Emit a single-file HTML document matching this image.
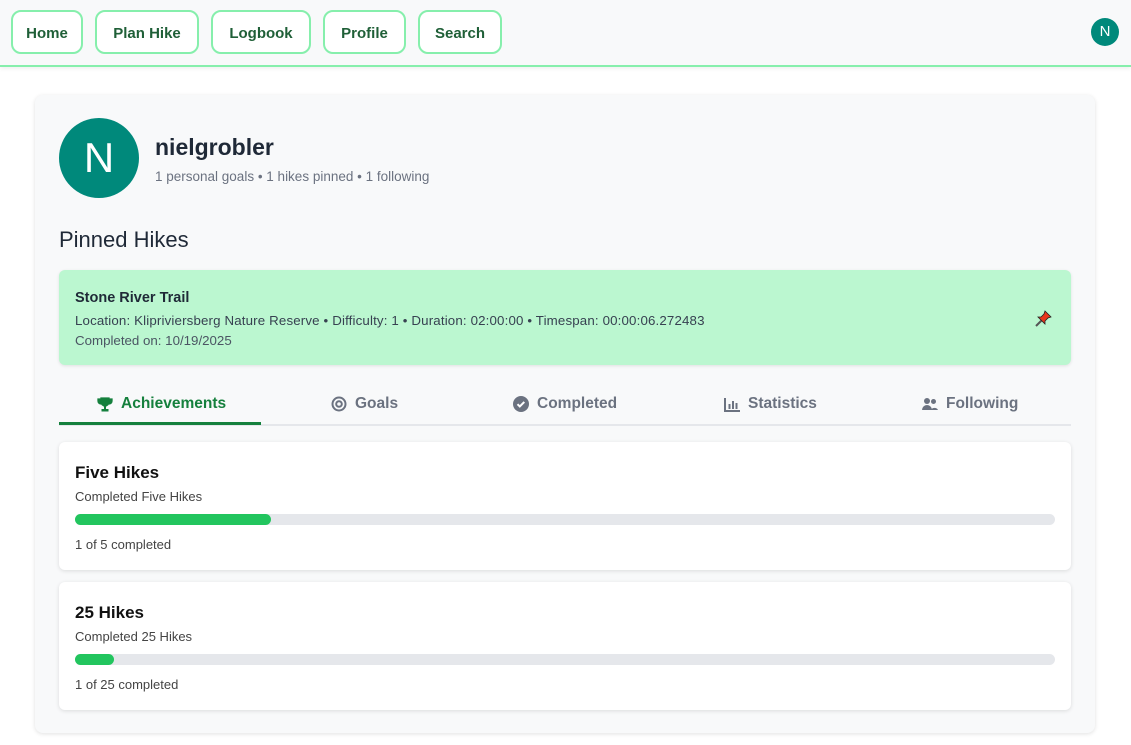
<!DOCTYPE html>
<html><head><style>
*{box-sizing:border-box;margin:0;padding:0}
body{width:1131px;height:745px;background:#fff;font-family:"Liberation Sans",sans-serif;overflow:hidden;position:relative}
.nav{position:absolute;left:0;top:0;width:1131px;height:67px;background:#f8f9fa;border-bottom:2px solid #86efac;box-shadow:0 2px 4px rgba(0,0,0,.06)}
.btn{position:absolute;top:10px;height:44px;border:2px solid #86efac;border-radius:10px;background:#fff;color:#1f5f37;font-weight:bold;font-size:15px;line-height:43px;text-align:center}
.av{position:absolute;left:1091px;top:18px;width:28px;height:28px;border-radius:50%;background:#00897b;color:#fff;font-size:15px;text-align:center;line-height:28px}
.card{position:absolute;left:35px;top:95px;width:1060px;height:638px;background:#f8f9fa;border-radius:8px;box-shadow:0 1px 4px rgba(0,0,0,.12)}
.big{position:absolute;left:59px;top:118px;width:80px;height:80px;border-radius:50%;background:#00897b;color:#fff;font-size:42px;text-align:center;line-height:80px}
.pin{position:absolute;left:59px;top:270px;width:1012px;height:95px;background:#bbf7d0;border-radius:6px;box-shadow:0 1px 3px rgba(0,0,0,.1)}
.tab{position:absolute;top:395px;font-size:15.5px;color:#6b7280;font-weight:bold;display:flex;align-items:center;gap:8px;height:18px}
.tab svg{flex:none}
.ach{position:absolute;left:59px;width:1012px;height:128px;background:#fff;border-radius:6px;box-shadow:0 1px 4px rgba(0,0,0,.12)}
.ach h3{position:absolute;left:16px;top:21px;font-size:17px;color:#111}
.ach .s{position:absolute;left:16px;top:47px;font-size:13px;color:#444}
.bar{position:absolute;left:16px;top:72px;width:980px;height:11px;background:#e5e7eb;border-radius:6px}
.bar i{display:block;height:11px;background:#22c55e;border-radius:6px}
.ach .c{position:absolute;left:16px;top:95px;font-size:13px;color:#444}
</style></head><body>
<div class="nav">
<div class="btn" style="left:11px;width:72px">Home</div>
<div class="btn" style="left:95px;width:104px">Plan Hike</div>
<div class="btn" style="left:211px;width:100px">Logbook</div>
<div class="btn" style="left:323px;width:83px">Profile</div>
<div class="btn" style="left:418px;width:84px">Search</div>
<div class="av">N</div>
</div>
<div class="card"></div>
<div class="big">N</div>
<div style="position:absolute;left:155px;top:134px;font-size:23px;font-weight:bold;color:#1f2937">nielgrobler</div>
<div style="position:absolute;left:155px;top:169px;font-size:13.5px;color:#6b7280">1 personal goals • 1 hikes pinned • 1 following</div>
<div style="position:absolute;left:59px;top:227px;font-size:22px;color:#1f2937">Pinned Hikes</div>
<div class="pin">
<div style="position:absolute;left:16px;top:20px;font-size:14.5px;font-weight:bold;color:#1f2937">Stone River Trail</div>
<div style="position:absolute;left:16px;top:43px;font-size:13.3px;color:#374151;letter-spacing:.15px">Location: Klipriviersberg Nature Reserve • Difficulty: 1 • Duration: 02:00:00 • Timespan: 00:00:06.272483</div>
<div style="position:absolute;left:16px;top:63px;font-size:13.3px;color:#4b5563">Completed on: 10/19/2025</div>
<svg style="position:absolute;left:975px;top:38px" width="20" height="20" viewBox="0 0 20 20"><path d="M2 18l6-6" stroke="#555" stroke-width="2"/><path d="M11 3l6 6-3 1-3 3 0 3-7-7 3 0 3-3z" fill="#e8361c" stroke="#222" stroke-width=".8"/></svg>
</div>
<div class="tab" style="left:97px;color:#15803d"><svg width="16" height="15" viewBox="0 0 16 15"><path d="M4 1h8v4a4 4 0 0 1-8 0z M4 2H1v2a3 3 0 0 0 3 3 M12 2h3v2a3 3 0 0 1-3 3" fill="#15803d" stroke="#15803d" stroke-width="1.3"/><rect x="7" y="8" width="2" height="4" fill="#15803d"/><rect x="4.5" y="12" width="7" height="2.5" fill="#15803d"/></svg>Achievements</div>
<div class="tab" style="left:331px"><svg width="16" height="16" viewBox="0 0 16 16"><circle cx="8" cy="8" r="6.5" fill="none" stroke="#6b7280" stroke-width="2"/><circle cx="8" cy="8" r="2.8" fill="none" stroke="#6b7280" stroke-width="2"/></svg>Goals</div>
<div class="tab" style="left:513px"><svg width="16" height="16" viewBox="0 0 16 16"><circle cx="8" cy="8" r="8" fill="#6b7280"/><path d="M4.5 8.2l2.3 2.3 4.5-4.6" fill="none" stroke="#fff" stroke-width="2"/></svg>Completed</div>
<div class="tab" style="left:724px"><svg width="16" height="15" viewBox="0 0 16 15"><path d="M1 1v13h15" fill="none" stroke="#6b7280" stroke-width="2"/><rect x="4.5" y="7" width="2" height="5" fill="#6b7280"/><rect x="8" y="4" width="2" height="8" fill="#6b7280"/><rect x="11.5" y="6" width="2" height="6" fill="#6b7280"/></svg>Statistics</div>
<div class="tab" style="left:922px"><svg width="16" height="14" viewBox="0 0 16 14"><circle cx="5" cy="4" r="3" fill="#6b7280"/><circle cx="11.5" cy="4.5" r="2.5" fill="#6b7280"/><path d="M0 13a5 5 0 0 1 10 0z M9 13a4 4 0 0 1 7 0z" fill="#6b7280"/></svg>Following</div>
<div style="position:absolute;left:59px;top:424px;width:1012px;height:2px;background:#e5e7eb"></div>
<div style="position:absolute;left:59px;top:422px;width:202px;height:3px;background:#15803d"></div>
<div class="ach" style="top:442px"><h3>Five Hikes</h3><div class="s">Completed Five Hikes</div><div class="bar"><i style="width:196px"></i></div><div class="c">1 of 5 completed</div></div>
<div class="ach" style="top:582px"><h3>25 Hikes</h3><div class="s">Completed 25 Hikes</div><div class="bar"><i style="width:39px"></i></div><div class="c">1 of 25 completed</div></div>
</body></html>
